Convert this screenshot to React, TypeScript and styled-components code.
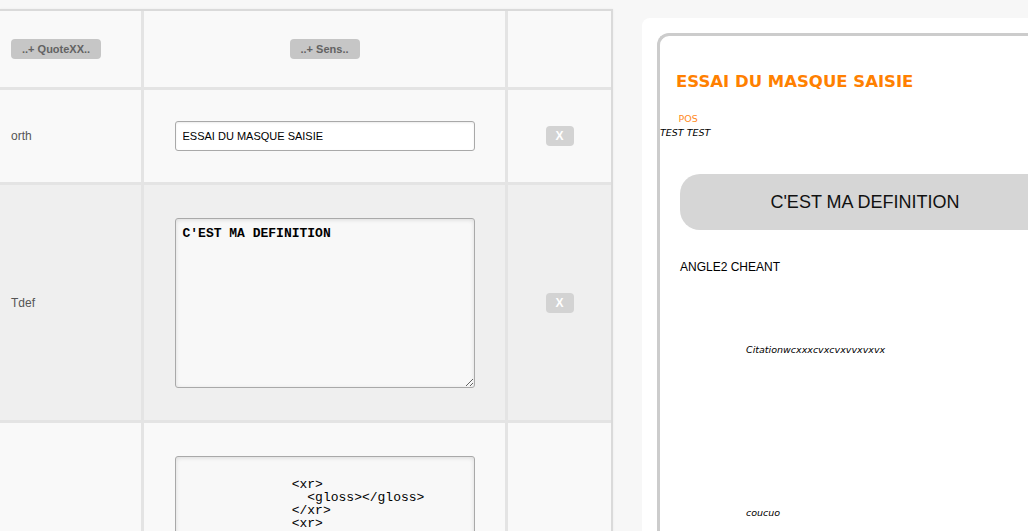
import styled, { createGlobalStyle } from "styled-components";

const GlobalStyle = createGlobalStyle`
  html, body {
    margin: 0;
    padding: 0;
    background: #f7f7f7;
    overflow: hidden;
  }
  body {
    font-family: "Liberation Sans", Arial, sans-serif;
  }
`;

const Page = styled.div`
  display: flex;
  align-items: flex-start;
  gap: 29px;
  width: 1028px;
  height: 531px;
  overflow: hidden;
`;

const Table = styled.div`
  flex: none;
  margin-top: 9px;
  display: grid;
  grid-template-columns: 141px 361px 103px;
  grid-auto-rows: auto;
  gap: 3px;
  background: #e4e4e4;
  border: 2px solid #dadada;
  border-left: none;
  box-shadow: 0 0 2px rgba(0, 0, 0, 0.06);
`;

const Cell = styled.div<{ $shade?: boolean; $align?: "left" | "center"; $h: number }>`
  height: ${(p) => p.$h}px;
  background: ${(p) => (p.$shade ? "#efefef" : "#f9f9f9")};
  display: flex;
  align-items: center;
  justify-content: ${(p) => (p.$align === "left" ? "flex-start" : "center")};
  padding: 0 11px;
  box-sizing: border-box;
`;

const Label = styled.span`
  font-size: 12px;
  color: #555;
`;

const AddButton = styled.button`
  height: 20px;
  padding: 0 11px;
  border: none;
  border-radius: 4px;
  background: #c6c6c6;
  color: #626262;
  font-family: "Liberation Sans", Arial, sans-serif;
  font-weight: bold;
  font-size: 11px;
  cursor: pointer;
`;

const RemoveButton = styled.button`
  width: 28px;
  height: 20px;
  padding: 0;
  border: none;
  border-radius: 4px;
  background: #d3d3d3;
  color: #fff;
  font-family: "Liberation Sans", Arial, sans-serif;
  font-weight: bold;
  font-size: 12px;
  cursor: pointer;
`;

const TextInput = styled.input`
  width: 300px;
  height: 30px;
  box-sizing: border-box;
  padding: 0 7px;
  border: 1px solid #a9a9a9;
  border-radius: 3px;
  background: #fff;
  box-shadow: inset 0 1px 2px rgba(0, 0, 0, 0.08);
  font-family: "Liberation Sans", Arial, sans-serif;
  font-size: 11px;
  color: #000;
`;

const TextArea = styled.textarea<{ $strong?: boolean }>`
  width: 300px;
  height: 170px;
  box-sizing: border-box;
  padding: 8px 7px;
  border: 1px solid #a9a9a9;
  border-radius: 3px;
  background: #f8f8f8;
  box-shadow: inset 0 1px 4px rgba(0, 0, 0, 0.12);
  font-family: "Liberation Mono", "Courier New", monospace;
  font-size: 13px;
  font-weight: ${(p) => (p.$strong ? 600 : 400)};
  line-height: 13px;
  color: #000;
  resize: both;
  white-space: pre;
  overflow: hidden;
`;

const Card = styled.div`
  flex: none;
  margin-top: 18px;
  width: 420px;
  height: 560px;
  background: #fff;
  border-radius: 8px;
  padding: 15px 0 0 15px;
  box-sizing: border-box;
`;

const Sheet = styled.div`
  width: 420px;
  height: 540px;
  border: 3px solid #cccccc;
  border-right: none;
  border-radius: 12px 0 0 0;
  box-sizing: border-box;
  padding-top: 36px;
  font-family: "DejaVu Sans", Verdana, sans-serif;
`;

const Title = styled.h1`
  margin: 0 0 0 16px;
  font-size: 16.5px;
  line-height: 20px;
  font-weight: bold;
  color: #ff8000;
`;

const Pos = styled.div`
  display: inline-flex;
  flex-direction: column;
  align-items: center;
  margin-top: 20px;
  font-size: 9.5px;
  line-height: 14px;
`;

const PosTag = styled.span`
  color: #ff8a1c;
  padding-left: 6px;
`;

const PosText = styled.span`
  font-style: italic;
  color: #000;
`;

const Definition = styled.div`
  margin: 34px 0 0 20px;
  width: 370px;
  height: 56px;
  border-radius: 20px;
  background: #d6d6d6;
  display: flex;
  align-items: center;
  justify-content: center;
  font-family: "Liberation Sans", Arial, sans-serif;
  font-size: 18px;
  color: #111;
`;

const Note = styled.div`
  margin: 30px 0 0 20px;
  font-family: "Liberation Sans", Arial, sans-serif;
  font-size: 12px;
  color: #000;
`;

const Quote = styled.div<{ $top: number }>`
  margin: ${(p) => p.$top}px 0 0 86px;
  font-size: 9.5px;
  font-style: italic;
  color: #000;
`;

const xmlSample =
  "\n              <xr>\n                <gloss></gloss>\n              </xr>\n              <xr>\n                <gloss></gloss>\n              </xr>";

export default function App() {
  return (
    <>
      <GlobalStyle />
      <Page>
        <Table>
          <Cell $h={76} $align="left">
            <AddButton>..+ QuoteXX..</AddButton>
          </Cell>
          <Cell $h={76}>
            <AddButton>..+ Sens..</AddButton>
          </Cell>
          <Cell $h={76} />

          <Cell $h={92} $align="left">
            <Label>orth</Label>
          </Cell>
          <Cell $h={92}>
            <TextInput defaultValue="ESSAI DU MASQUE SAISIE" />
          </Cell>
          <Cell $h={92}>
            <RemoveButton>X</RemoveButton>
          </Cell>

          <Cell $h={235} $shade $align="left">
            <Label>Tdef</Label>
          </Cell>
          <Cell $h={235} $shade>
            <TextArea $strong defaultValue="C'EST MA DEFINITION" />
          </Cell>
          <Cell $h={235} $shade>
            <RemoveButton>X</RemoveButton>
          </Cell>

          <Cell $h={235} $align="left" />
          <Cell $h={235}>
            <TextArea defaultValue={xmlSample} />
          </Cell>
          <Cell $h={235} />
        </Table>

        <Card>
          <Sheet>
            <Title>ESSAI DU MASQUE SAISIE</Title>
            <Pos>
              <PosTag>POS</PosTag>
              <PosText>TEST TEST</PosText>
            </Pos>
            <Definition>C'EST MA DEFINITION</Definition>
            <Note>ANGLE2 CHEANT</Note>
            <Quote $top={70}>Citationwcxxxcvxcvxvvxvxvx</Quote>
            <Quote $top={152}>coucuo</Quote>
          </Sheet>
        </Card>
      </Page>
    </>
  );
}
